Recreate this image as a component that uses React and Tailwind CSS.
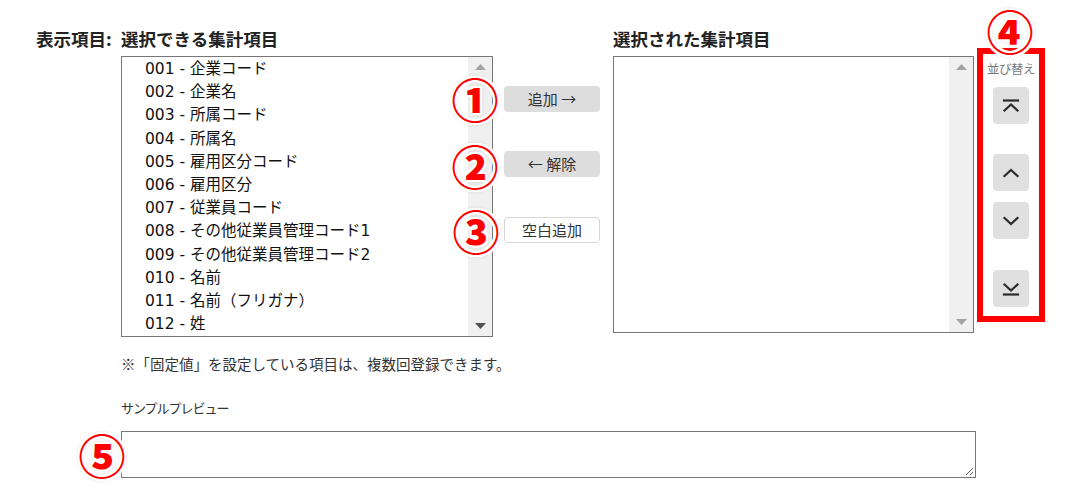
import React from "react";

const leftItems = [
  "001 - 企業コード",
  "002 - 企業名",
  "003 - 所属コード",
  "004 - 所属名",
  "005 - 雇用区分コード",
  "006 - 雇用区分",
  "007 - 従業員コード",
  "008 - その他従業員管理コード1",
  "009 - その他従業員管理コード2",
  "010 - 名前",
  "011 - 名前（フリガナ）",
  "012 - 姓",
];

const jp = { fontFamily: '"Noto Sans CJK JP", sans-serif' };

function Marker({ n, className }) {
  return (
    <span
      className={
        "absolute flex items-center justify-center w-[44px] h-[44px] text-[47px] leading-[44px] font-black text-[#ff0000] [text-shadow:2px_0_0_#fff,-2px_0_0_#fff,0_2px_0_#fff,0_-2px_0_#fff,2px_2px_0_#fff,-2px_-2px_0_#fff,2px_-2px_0_#fff,-2px_2px_0_#fff,0_0_4px_#999] " +
        className
      }
      style={jp}
    >
      {n}
    </span>
  );
}

function Scrollbar({ dim }) {
  return (
    <div className="w-[24px] h-full bg-[#f0f0f0] flex flex-col items-center justify-between py-[7px]">
      <svg width="11" height="6" viewBox="0 0 11 6">
        <path d="M5.5 0 L11 6 L0 6 Z" fill="#a3a3a3" />
      </svg>
      <svg width="11" height="6" viewBox="0 0 11 6">
        <path d="M0 0 L11 0 L5.5 6 Z" fill={dim ? "#a3a3a3" : "#505050"} />
      </svg>
    </div>
  );
}

function SortButton({ children, className = "" }) {
  return (
    <button className={"w-[36px] h-[37px] rounded-[4px] bg-[#e0e0e0] flex items-center justify-center " + className}>
      <svg width="20" height="20" viewBox="0 0 20 20" fill="none" stroke="#2a2a2a" strokeWidth="2.2" strokeLinecap="square" strokeLinejoin="miter">
        {children}
      </svg>
    </button>
  );
}

export default function App() {
  return (
    <div className="relative w-[1088px] h-[501px] bg-white text-[#222] overflow-hidden" style={jp}>
      <div className="flex pl-[36px] pt-[27px]">
        <div className="w-[85px] text-[17.5px] leading-[24px] font-bold">表示項目:</div>

        <div className="flex flex-col">
          <div className="flex items-start">
            {/* available items */}
            <div className="w-[372px] flex flex-col">
              <div className="text-[17.5px] leading-[24px] font-bold">選択できる集計項目</div>
              <div className="mt-[5px] h-[281px] border border-[#767676] flex">
                <ul
                  className="flex-1 pl-[23px] pt-[1px] text-[15.5px] leading-[23.2px] text-[#111]"
                  style={{ fontFamily: '"DejaVu Sans", "Noto Sans CJK JP", sans-serif' }}
                >
                  {leftItems.map((it) => (
                    <li key={it} className="whitespace-nowrap">{it}</li>
                  ))}
                </ul>
                <Scrollbar />
              </div>
            </div>

            {/* action buttons */}
            <div className="ml-[11px] w-[96px] mt-[59px] flex flex-col text-[15px] text-[#333]">
              <button className="h-[26px] rounded-[4px] bg-[#dddddd] flex items-center justify-center">追加 →</button>
              <button className="mt-[39px] h-[26px] rounded-[4px] bg-[#dddddd] flex items-center justify-center">← 解除</button>
              <button className="mt-[40px] h-[26px] rounded-[4px] bg-white border border-[#d6d6d6] flex items-center justify-center">空白追加</button>
            </div>

            {/* selected items */}
            <div className="ml-[13px] w-[361px] flex flex-col">
              <div className="text-[17.5px] leading-[24px] font-bold">選択された集計項目</div>
              <div className="mt-[5px] h-[277px] border border-[#767676] flex">
                <div className="flex-1" />
                <Scrollbar dim />
              </div>
            </div>

            {/* sort */}
            <div className="ml-[3px] mt-[21px] w-[68px] h-[274px] border-[6px] border-[#ff0000] flex flex-col items-center">
              <div className="mt-[7px] text-[12.5px] leading-[16px] text-[#777] tracking-[-0.5px]">並び替え</div>
              <SortButton className="mt-[10px]">
                <path d="M3 4.5 H17" />
                <path d="M3.5 14.5 L10 8.5 L16.5 14.5" />
              </SortButton>
              <SortButton className="mt-[30px]">
                <path d="M3.5 13 L10 7 L16.5 13" />
              </SortButton>
              <SortButton className="mt-[11px]">
                <path d="M3.5 7 L10 13 L16.5 7" />
              </SortButton>
              <SortButton className="mt-[31px]">
                <path d="M3.5 5.5 L10 11.5 L16.5 5.5" />
                <path d="M3 15.5 H17" />
              </SortButton>
            </div>
          </div>

          <p className="mt-[17px] text-[14.5px] leading-[20px] text-[#333]">
            ※「固定値」を設定している項目は、複数回登録できます。
          </p>
          <p className="mt-[24px] text-[13px] leading-[20px] text-[#333] tracking-[-1px]">サンプルプレビュー</p>
          <div className="relative mt-[13px] w-[855px] h-[47px] border border-[#767676]">
            <svg className="absolute right-[1px] bottom-[1px]" width="10" height="10" viewBox="0 0 10 10" stroke="#666" strokeWidth="1">
              <path d="M9 2 L2 9" />
              <path d="M9 6 L6 9" />
            </svg>
          </div>
        </div>
      </div>

      <Marker n="①" className="left-[453px] top-[76px]" />
      <Marker n="②" className="left-[453px] top-[143px]" />
      <Marker n="③" className="left-[454px] top-[208px]" />
      <Marker n="④" className="left-[988px] top-[8px]" />
      <Marker n="⑤" className="left-[80px] top-[432px]" />
    </div>
  );
}
